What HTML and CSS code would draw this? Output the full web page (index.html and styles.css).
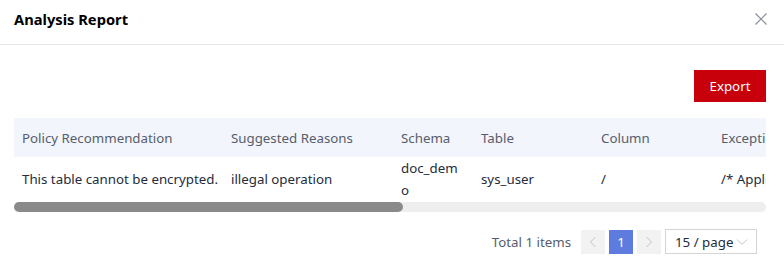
FILE: index.html
```html
<!DOCTYPE html>
<html lang="en">

<head>
    <meta charset="UTF-8">
    <meta name="viewport" content="width=device-width, initial-scale=1.0">
    <title>Analysis Report</title>
    <link rel="stylesheet" href="styles.css">
</head>

<body>
    <div class="dialog">
        <div class="dialog-header">
            <h1>Analysis Report</h1>
            <button class="close" aria-label="Close">
                <svg width="12" height="12" viewBox="0 0 12 12">
                    <path d="M0.5 0.5 L11.5 11.5 M11.5 0.5 L0.5 11.5" stroke="#8a8e99" stroke-width="1.2" fill="none" />
                </svg>
            </button>
        </div>

        <div class="dialog-body">
            <div class="toolbar">
                <button class="btn-export">Export</button>
            </div>

            <div class="table-wrap">
                <table class="report">
                    <colgroup>
                        <col style="width: 209px">
                        <col style="width: 170px">
                        <col style="width: 80px">
                        <col style="width: 120px">
                        <col style="width: 120px">
                        <col style="width: 455px">
                        <col style="width: 300px">
                    </colgroup>
                    <thead>
                        <tr>
                            <th>Policy Recommendation</th>
                            <th>Suggested Reasons</th>
                            <th>Schema</th>
                            <th>Table</th>
                            <th>Column</th>
                            <th>Exception Information</th>
                            <th>Operation</th>
                        </tr>
                    </thead>
                    <tbody>
                        <tr>
                            <td>This table cannot be encrypted.</td>
                            <td>illegal operation</td>
                            <td class="wrap">doc_demo</td>
                            <td>sys_user</td>
                            <td>/</td>
                            <td>/* Application SQL */ select * from sys_user</td>
                            <td>--</td>
                        </tr>
                    </tbody>
                </table>
            </div>
            <div class="scrollbar">
                <div class="scrollbar-thumb" style="width: 389px"></div>
            </div>

            <div class="pager">
                <span class="total">Total 1 items</span>
                <button class="page-btn arrow">
                    <svg width="8" height="12" viewBox="0 0 8 12"><path d="M6.5 1 L1.5 6 L6.5 11" stroke="#c2c4ca" fill="none" /></svg>
                </button>
                <button class="page-btn active">1</button>
                <button class="page-btn arrow">
                    <svg width="8" height="12" viewBox="0 0 8 12"><path d="M1.5 1 L6.5 6 L1.5 11" stroke="#c2c4ca" fill="none" /></svg>
                </button>
                <div class="page-size">
                    <span>15 / page</span>
                    <svg width="12" height="8" viewBox="0 0 12 8"><path d="M1 1.5 L6 6.5 L11 1.5" stroke="#c2c4ca" fill="none" /></svg>
                </div>
            </div>
        </div>
    </div>
</body>

</html>
```

FILE: styles.css
```css
body {
    margin: 0;
    font-family: "Noto Sans", Arial, sans-serif;
    font-size: 13.3px;
    color: #252b3a;
    background: #fff;
}

button {
    font-family: inherit;
    cursor: pointer;
}

.dialog-header {
    height: 44px;
    display: flex;
    align-items: center;
    justify-content: space-between;
    padding: 0 17px 0 14px;
    border-bottom: 1px solid #e5e6e8;
}

.dialog-header h1 {
    margin: 0;
    font-size: 14.7px;
    font-weight: bold;
    color: #000;
    margin-top: -7px;
}

.close {
    border: 0;
    background: none;
    padding: 0;
    width: 12px;
    height: 12px;
    display: flex;
    margin-top: -7px;
}

.dialog-body {
    padding: 25px 18px 0 14px;
}

.toolbar {
    display: flex;
    justify-content: flex-end;
    margin-bottom: 16px;
}

.btn-export {
    width: 72px;
    height: 32px;
    border: 0;
    background: #c7000b;
    color: #fff;
    font-size: 13.3px;
}

.table-wrap {
    overflow: hidden;
}

.report {
    border-collapse: collapse;
    table-layout: fixed;
    width: 1454px;
}

.report th {
    height: 39px;
    padding: 0 8px;
    background: #f2f5fc;
    color: #575d6c;
    font-weight: normal;
    text-align: left;
    white-space: nowrap;
    overflow: hidden;
}

.report td {
    height: 41px;
    padding: 0 8px;
    line-height: 22px;
    vertical-align: middle;
    white-space: nowrap;
}

.report td.wrap {
    white-space: normal;
    word-break: break-all;
}

.scrollbar {
    height: 10px;
    background: #eeeeee;
    border-radius: 5px;
    margin-top: 1px;
}

.scrollbar-thumb {
    height: 100%;
    background: #8a8a8a;
    border-radius: 5px;
}

.pager {
    display: flex;
    justify-content: flex-end;
    align-items: center;
    gap: 4px;
    padding: 17px 9px 0 0;
}

.total {
    color: #575d6c;
    margin-right: 6px;
}

.page-btn {
    width: 24px;
    height: 24px;
    border: 0;
    padding: 0;
    background: #f2f2f2;
    color: #fff;
    font-size: 13.3px;
    display: flex;
    align-items: center;
    justify-content: center;
}

.page-btn.active {
    background: #5e7ce0;
}

.page-size {
    width: 92px;
    height: 25px;
    border: 1px solid #d5d5d5;
    box-sizing: border-box;
    display: flex;
    align-items: center;
    justify-content: space-between;
    padding: 0 8px 0 9px;
    white-space: nowrap;
    color: #252b3a;
}
```
